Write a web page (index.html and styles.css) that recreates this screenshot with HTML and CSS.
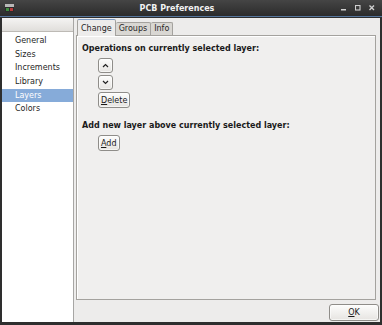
FILE: index.html
```html
<!DOCTYPE html>
<html lang="en">
<head>
  <meta charset="UTF-8" />
  <title>PCB Preferences</title>
  <link rel="stylesheet" href="styles.css">
</head>
<body>
  <div class="frame">
    <div class="titlebar">
      <div class="app-icon">
        <svg width="9" height="8" viewBox="0 0 9 8">
          <rect x="0" y="0" width="9" height="3" fill="#b8b8b8"/>
          <rect x="0" y="3" width="9" height="5" fill="#2c2c2c"/>
          <rect x="1" y="4" width="3" height="3" fill="#3f8f3f"/>
          <rect x="5" y="4" width="3" height="3" fill="#b83a3a"/>
        </svg>
      </div>
      <div class="title">PCB Preferences</div>
      <div class="wm-buttons">
        <svg width="6" height="6" viewBox="0 0 6 6"><rect x="0" y="4" width="5" height="1.5" fill="#cfcfcf"/></svg>
        <svg width="6" height="6" viewBox="0 0 6 6"><rect x="0.5" y="0.5" width="4.5" height="4.5" fill="none" stroke="#cfcfcf" stroke-width="1.1"/></svg>
        <svg width="6" height="6" viewBox="0 0 6 6"><path d="M0.5 0.5 L5 5 M5 0.5 L0.5 5" stroke="#cfcfcf" stroke-width="1.4"/></svg>
      </div>
    </div>

    <div class="client">
      <div class="sidebar">
        <div class="tree-header"></div>
        <ul class="tree">
          <li>General</li>
          <li>Sizes</li>
          <li>Increments</li>
          <li>Library</li>
          <li class="selected">Layers</li>
          <li>Colors</li>
        </ul>
      </div>

      <div class="content">
        <div class="notebook">
          <div class="tabs">
            <div class="tab active">Change</div>
            <div class="tab">Groups</div>
            <div class="tab">Info</div>
          </div>
          <div class="page">
            <div class="section-title">Operations on currently selected layer:</div>
            <div class="btn-col">
              <button class="btn icon-btn">
                <svg width="7" height="5" viewBox="0 0 7 5"><path d="M1 4 L3.5 1.5 L6 4" fill="none" stroke="#222" stroke-width="1.2"/></svg>
              </button>
              <button class="btn icon-btn">
                <svg width="7" height="5" viewBox="0 0 7 5"><path d="M1 1 L3.5 3.5 L6 1" fill="none" stroke="#222" stroke-width="1.2"/></svg>
              </button>
              <button class="btn"><u>D</u>elete</button>
            </div>
            <div class="section-title second">Add new layer above currently selected layer:</div>
            <div class="btn-col">
              <button class="btn"><u>A</u>dd</button>
            </div>
          </div>
        </div>
        <div class="actions">
          <button class="btn ok"><u>O</u>K</button>
        </div>
      </div>
    </div>
  </div>
</body>
</html>
```

FILE: styles.css
```css
body {
  margin: 0;
  font-family: "DejaVu Sans", sans-serif;
  font-size: 8px;
  color: #1a1a1a;
  background: #2e2e2e;
}
.frame {
  width: 382px;
  height: 325px;
  display: flex;
  flex-direction: column;
  background: #2e2e2e;
}
.titlebar {
  height: 16px;
  display: flex;
  align-items: center;
  background: linear-gradient(#454545, #2b2b2b);
  border-bottom: 1px solid #55759c;
  margin-bottom: 1px;
}
.app-icon {
  width: 16px;
  display: flex;
  justify-content: center;
  padding-left: 1px;
}
.title {
  flex: 1;
  text-align: center;
  color: #f2f2f2;
  font-weight: bold;
  font-size: 8px;
}
.wm-buttons {
  width: 45px;
  display: flex;
  align-items: center;
  gap: 8px;
  padding-left: 4px;
  box-sizing: border-box;
}
.client {
  height: 304px;
  margin: 0 2px 0 2px;
  display: flex;
  background: #edeceb;
}
.sidebar {
  width: 71px;
  background: white;
  border-right: 1px solid #a7a6a4;
}
.tree-header {
  height: 13px;
  background: linear-gradient(#f5f4f3, #e0dedb);
  border-bottom: 1px solid #bdbab5;
}
.tree {
  list-style: none;
  margin: 0;
  padding: 2px 0 0 0;
}
.tree li {
  height: 13.7px;
  line-height: 13.7px;
  padding-left: 13px;
  color: #262626;
}
.tree li.selected {
  background: #86abd9;
  color: white;
}
.content {
  flex: 1;
  display: flex;
  flex-direction: column;
  padding-left: 2px;
}
.notebook {
  flex: 1;
  display: flex;
  flex-direction: column;
  margin-right: 4px;
}
.tabs {
  display: flex;
  align-items: flex-end;
  height: 17px;
  padding-left: 1px;
}
.tab {
  height: 12px;
  line-height: 12px;
  padding: 0 3px;
  background: #d9d7d3;
  border: 1px solid #a4a29e;
  border-bottom: none;
  border-left: none;
  border-radius: 2px 2px 0 0;
  color: #262626;
}
.tab.active {
  height: 16px;
  line-height: 17px;
  padding: 0 3px;
  background: #edeceb;
  border-left: 1px solid #a4a29e;
  border-top: 1px solid #7f9cc4;
  margin-bottom: -1px;
  position: relative;
}
.page {
  flex: 1;
  border: 1px solid #a4a29e;
  box-shadow: inset 1px 1px 0 #ffffff;
  background: #f0efee;
  padding: 8px 5px;
}
.section-title {
  font-weight: bold;
  line-height: 10px;
}
.section-title.second {
  margin-top: 13px;
}
.btn-col {
  display: flex;
  flex-direction: column;
  align-items: flex-start;
  gap: 2px;
  margin: 4px 0 0 16px;
}
.btn {
  font-family: "DejaVu Sans", sans-serif;
  font-size: 8px;
  color: #1a1a1a;
  height: 16px;
  padding: 0 2px;
  border: 1px solid #8f8d89;
  border-radius: 3px;
  background: linear-gradient(#fdfdfc, #e6e4e1);
  box-shadow: inset 0 0 0 1px rgba(255,255,255,0.6);
}
.icon-btn {
  width: 15px;
  height: 15px;
  padding: 0;
  display: flex;
  align-items: center;
  justify-content: center;
}
.actions {
  height: 22px;
  display: flex;
  justify-content: flex-end;
  align-items: flex-start;
  padding-top: 4px;
  box-sizing: border-box;
  padding-right: 1px;
}
.btn.ok {
  width: 50px;
  height: 17px;
}
```
